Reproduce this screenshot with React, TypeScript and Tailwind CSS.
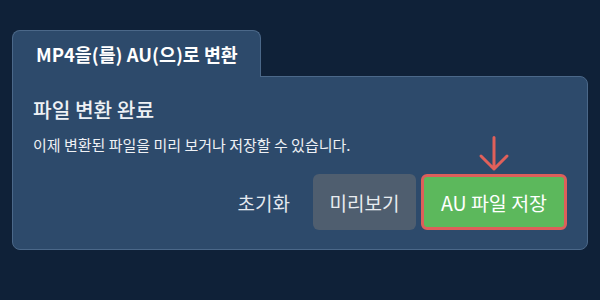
import React from "react";

export default function App() {
  return (
    <div
      className="w-[600px] h-[300px] bg-[#0f2138] pt-[30px] px-[12px]"
      style={{ fontFamily: '"Noto Sans CJK KR", "Noto Sans", sans-serif' }}
    >
      <div className="w-[576px]">
        <div className="relative z-10 -mb-px w-[249px] h-[47px] bg-[#2d4a6b] border border-b-0 border-[#4b6889] rounded-t-lg flex items-center pl-[23px]">
          <span className="text-white font-bold text-[18.4px] leading-none">MP4을(를) AU(으)로 변환</span>
        </div>
        <div className="relative h-[174px] bg-[#2d4a6b] border border-[#4b6889] rounded-b-lg rounded-tr-lg px-[20px] pt-[22px]">
          <div className="text-[#eef1f5] text-[20.3px] font-medium leading-none">파일 변환 완료</div>
          <div className="text-[#eef1f5] text-[15px] leading-none mt-[18px]">이제 변환된 파일을 미리 보거나 저장할 수 있습니다.</div>
          <div className="flex justify-end items-center mt-[22px]">
            <button className="text-[#e3e8ee] text-[19px] mr-[23px] leading-none">초기화</button>
            <button className="w-[103px] h-[56px] rounded-md bg-[#4f5e6f] text-[#e8ecf0] text-[19px] leading-none mr-[5px]">미리보기</button>
            <div className="relative">
              <svg className="absolute left-1/2 -translate-x-1/2 -top-[38px]" width="32" height="36" viewBox="0 0 32 36" fill="none">
                <path d="M16 1.5 L16 33 M3 20 L16 33 L29 20" stroke="#e0605a" strokeWidth="3" strokeLinecap="round" strokeLinejoin="round" />
              </svg>
              <button className="w-[146px] h-[56px] rounded-md bg-[#5cb85c] border-[3px] border-[#dd5f5a] text-white text-[19.5px] leading-none">AU 파일 저장</button>
            </div>
          </div>
        </div>
      </div>
    </div>
  );
}
